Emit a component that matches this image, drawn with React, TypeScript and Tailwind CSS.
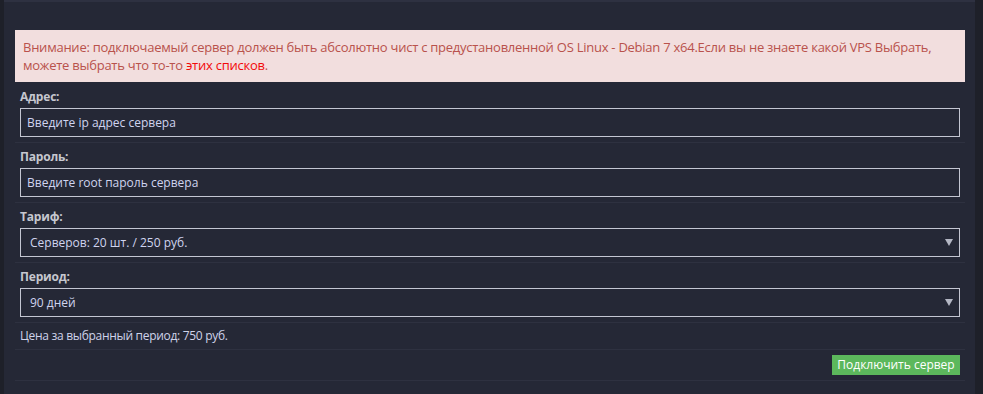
import { ReactNode } from 'react';

const font = { fontFamily: '"Open Sans", "Noto Sans", sans-serif' };

function Caret() {
  return (
    <svg width="8" height="7" viewBox="0 0 8 7" className="shrink-0">
      <path d="M0 0 H8 L4 7 Z" fill="#b4b7c4" />
    </svg>
  );
}

function Group({ label, children, first }: { label: string; children: ReactNode; first?: boolean }) {
  return (
    <div className={`border-b border-[#2e3140] ${first ? 'pt-[6px]' : 'pt-[5px]'} pb-[5px]`}>
      <div className="h-[18px] px-[5px] text-[12px] leading-[18px] font-bold tracking-[-0.2px] text-[#c6c7cf]">{label}</div>
      <div className="mt-[2px] px-[5px]">{children}</div>
    </div>
  );
}

function TextField({ placeholder }: { placeholder: string }) {
  return (
    <div className="flex h-[29px] items-center border border-[#c4c6d2] px-[6px] text-[12px] text-[#d0d4ef]">
      {placeholder}
    </div>
  );
}

function SelectField({ value }: { value: string }) {
  return (
    <div className="flex h-[29px] items-center justify-between border border-[#c4c6d2] pl-[9px] pr-[6px] text-[12px] text-[#d0d4ef]">
      <span>{value}</span>
      <Caret />
    </div>
  );
}

export default function App() {
  return (
    <div className="flex h-[394px] w-[983px] overflow-hidden bg-[#1e2029]" style={font}>
      <div className="w-[4px] shrink-0 bg-[#1e2029]" />
      <div className="flex w-[971px] shrink-0 flex-col bg-[#252836]">
        <div className="h-[2px] bg-[#2e3141]" />
        <div className="pl-[11px] pr-[10px] pt-[28px]">
          <div className="bg-[#f2dede] px-[8px] py-[8px] text-[13px] leading-[18px] tracking-[-0.25px] text-[#b9524c]">
            Внимание: подключаемый сервер должен быть абсолютно чист с предустановленной OS Linux - Debian 7 x64.Если вы не знаете какой VPS Выбрать, можете выбрать что то-то <span className="text-[#f20a0a]">этих списков</span>.
          </div>

          <Group label="Адрес:" first>
            <TextField placeholder="Введите ip адрес сервера" />
          </Group>
          <Group label="Пароль:">
            <TextField placeholder="Введите root пароль сервера" />
          </Group>
          <Group label="Тариф:">
            <SelectField value="Серверов: 20 шт. / 250 руб." />
          </Group>
          <Group label="Период:">
            <SelectField value="90 дней" />
          </Group>

          <div className="border-b border-[#2e3140] px-[5px] pt-[4px] pb-[4px] text-[12px] leading-[18px] tracking-[-0.3px] text-[#cfd3ea]">
            Цена за выбранный период: 750 руб.
          </div>

          <div className="flex justify-end border-b border-[#2e3140] px-[5px] py-[5px]">
            <button className="flex h-[20px] w-[128px] items-center justify-center bg-[#5cb85c] text-[12px] text-white">
              Подключить сервер
            </button>
          </div>
        </div>
      </div>
      <div className="flex-1 bg-[#1e2029]" />
    </div>
  );
}
